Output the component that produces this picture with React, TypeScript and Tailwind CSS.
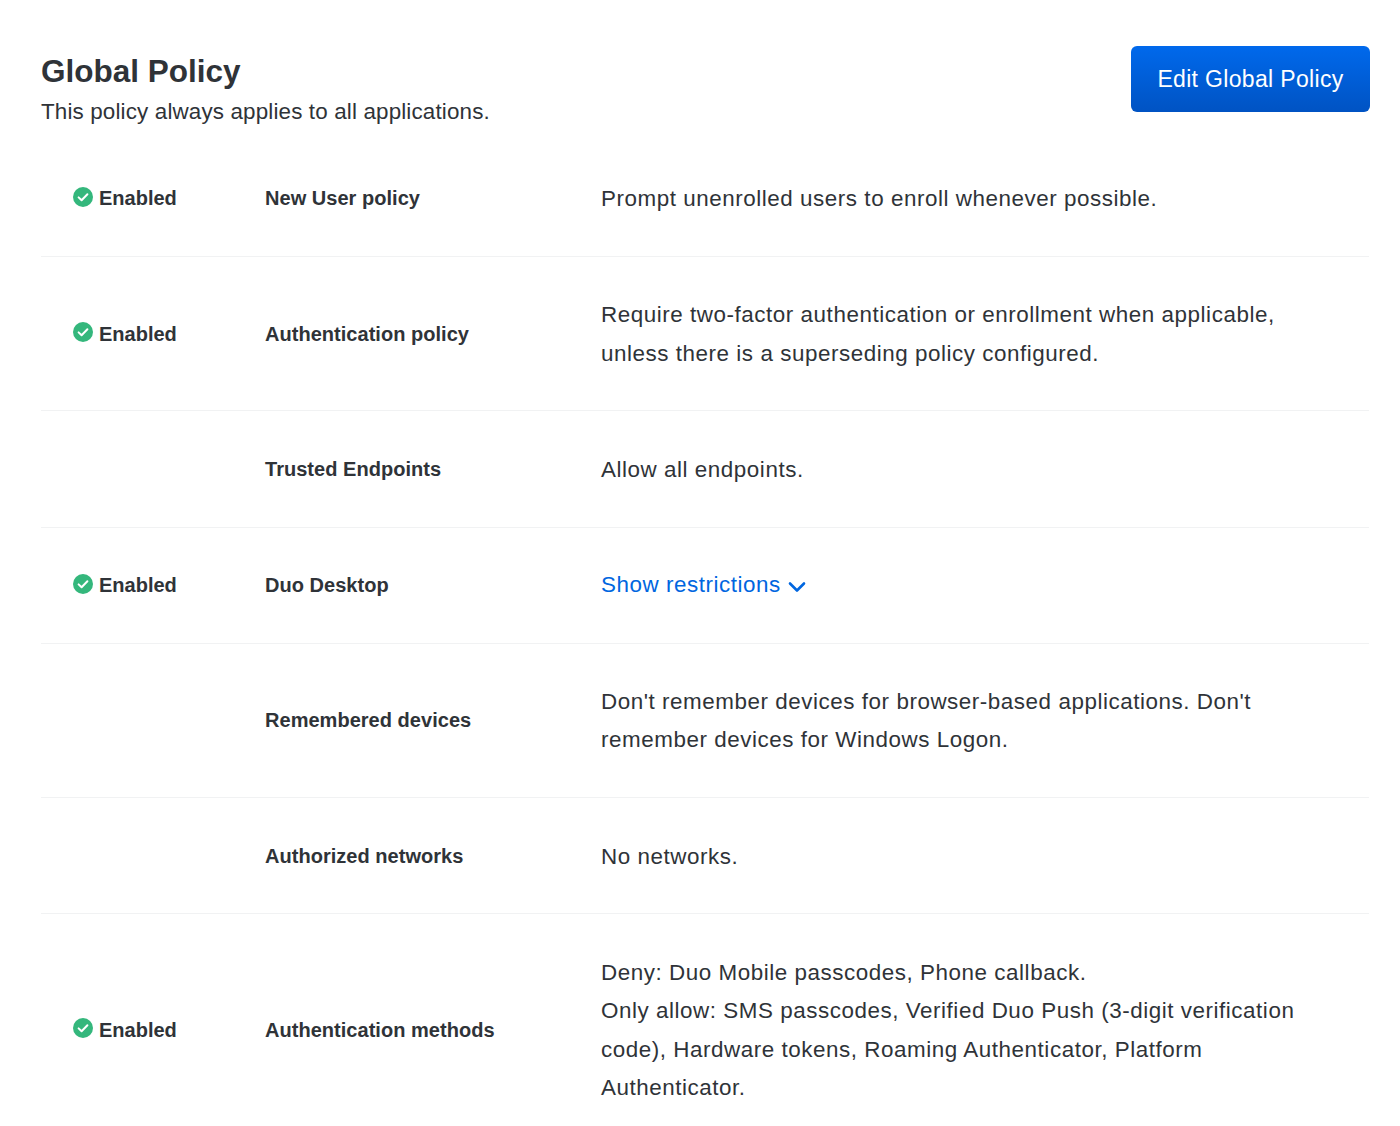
import React from 'react';

type PolicyRow = {
  enabled?: boolean;
  name: string;
  description?: string[];
  link?: string;
};

const rows: PolicyRow[] = [
  { enabled: true, name: 'New User policy', description: ['Prompt unenrolled users to enroll whenever possible.'] },
  {
    enabled: true,
    name: 'Authentication policy',
    description: ['Require two-factor authentication or enrollment when applicable, unless there is a superseding policy configured.'],
  },
  { name: 'Trusted Endpoints', description: ['Allow all endpoints.'] },
  { enabled: true, name: 'Duo Desktop', link: 'Show restrictions' },
  {
    name: 'Remembered devices',
    description: ["Don't remember devices for browser-based applications. Don't remember devices for Windows Logon."],
  },
  { name: 'Authorized networks', description: ['No networks.'] },
  {
    enabled: true,
    name: 'Authentication methods',
    description: [
      'Deny: Duo Mobile passcodes, Phone callback.',
      'Only allow: SMS passcodes, Verified Duo Push (3-digit verification code), Hardware tokens, Roaming Authenticator, Platform Authenticator.',
    ],
  },
];

function EnabledBadge() {
  return (
    <div className="flex items-center gap-[6px]">
      <svg className="w-[20px] h-[20px] -mt-[3px]" viewBox="0 0 20 20">
        <circle cx="10" cy="10" r="10" fill="#34b77c" />
        <path d="M5.6 10.4l3 2.9 5.8-6" fill="none" stroke="#fff" strokeWidth="2" strokeLinecap="round" strokeLinejoin="round" />
      </svg>
      <span className="text-[20px] font-bold">Enabled</span>
    </div>
  );
}

export default function App() {
  return (
    <div className="h-[1126px] overflow-hidden bg-white text-[#2f3338] font-['Liberation_Sans',Arial,sans-serif]">
      <div className="pl-[41px] pr-[31px]">
        {/* Header */}
        <div className="flex items-start justify-between pt-[46px] h-[140.75px]">
          <div>
            <h1 className="text-[31.5px] leading-[38px] mt-[6px] font-bold">Global Policy</h1>
            <p className="text-[22.4px] leading-[30px] mt-[7px] tracking-[0.15px]">This policy always applies to all applications.</p>
          </div>
          <button className="w-[239px] h-[66px] -mr-[1px] rounded-[6px] bg-gradient-to-b from-[#0069ec] to-[#0053c3] text-white text-[23px] tracking-[0.33px] pt-[1px]">
            Edit Global Policy
          </button>
        </div>

        {/* Policy rows */}
        {rows.map((row) => (
          <div key={row.name} className="flex items-center py-[38.3px] border-b border-[#f1f2f3] last:border-b-0">
            <div className="w-[224px] pl-[32px] shrink-0">{row.enabled && <EnabledBadge />}</div>
            <div className="w-[336px] shrink-0 text-[20px] font-bold tracking-[0.03px]">{row.name}</div>
            <div className="flex-1 pr-[32px] mt-[1px] -mb-[1px] text-[22.4px] leading-[38.5px] tracking-[0.55px]">
              {row.description?.map((line) => <div key={line}>{line}</div>)}
              {row.link && (
                <a className="flex items-center gap-[7px] -mt-[1px] mb-[1px] text-[#0066e0]">
                  {row.link}
                  <svg className="w-[18px] h-[12px] mt-[3px]" viewBox="0 0 18 12">
                    <path d="M2 2.5l7 7 7-7" fill="none" stroke="#0066e0" strokeWidth="2.6" strokeLinecap="round" strokeLinejoin="round" />
                  </svg>
                </a>
              )}
            </div>
          </div>
        ))}
      </div>
    </div>
  );
}
